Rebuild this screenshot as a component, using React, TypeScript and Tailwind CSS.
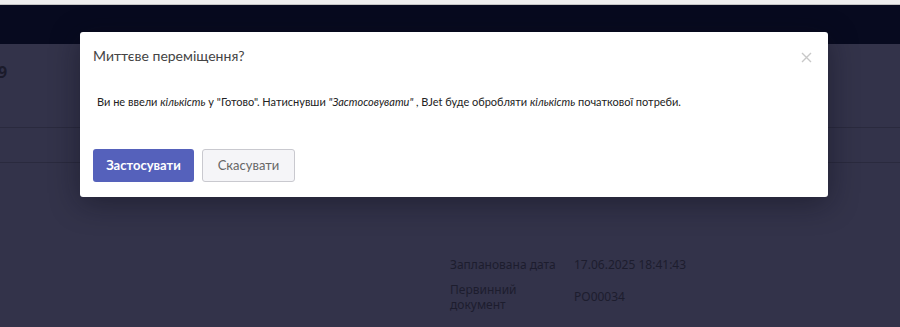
import React from "react";

const font = { fontFamily: '"Noto Sans", "Open Sans", sans-serif' };
const modalFont = { fontFamily: 'Lato, "Noto Sans", sans-serif' };

function PageBehind() {
  return (
    <div className="flex flex-col h-[327px] w-[900px] overflow-hidden">
      <div className="h-[5px] bg-[#eeeeee] border-b border-[#c4c4c4]" />
      {/* header */}
      <div className="h-[39px] bg-[#070a1f]" />
      {/* content under overlay */}
      <div className="flex-1 bg-[#33334a] relative">
        <div className="h-[83px] pt-[16px] -ml-[2px] text-[16px] font-bold text-[#1b1b2b]">9</div>
        <div className="h-[35px] border-t border-[#2a2a3e]" />
        <div className="border-t border-[#2a2a3e]" />
        <div className="pl-[450px] pt-[93px] text-[12px] text-[#1d1d2e] flex flex-col gap-[8px]">
          <div className="flex">
            <div className="w-[124px]">Запланована дата</div>
            <div>17.06.2025 18:41:43</div>
          </div>
          <div className="flex items-center">
            <div className="w-[124px] flex flex-col leading-[15px]">
              <span>Первинний</span>
              <span>документ</span>
            </div>
            <div>PO00034</div>
          </div>
        </div>
      </div>
    </div>
  );
}

function Modal() {
  return (
    <div
      className="absolute left-[80px] top-[32px] w-[748px] h-[165px] bg-white rounded-[3px] shadow-[0_6px_30px_rgba(10,10,25,0.45)] flex flex-col"
      style={modalFont}
    >
      <div className="flex items-start justify-between pl-[13px] pr-[16px] pt-[13px]">
        <div className="text-[14px] text-[#444] leading-[22px]">Миттєве переміщення?</div>
        <svg width="11" height="11" viewBox="0 0 11 11" className="mt-[7px]">
          <path d="M1 1L10 10M10 1L1 10" stroke="#c8c8c8" strokeWidth="1.4" />
        </svg>
      </div>
      <div className="pl-[17px] pt-[27px] text-[11px] text-[#222] leading-[16px]">
        Ви не ввели <i>кількість</i> у "Готово". Натиснувши <i>"Застосовувати"</i> , BJet буде обробляти{" "}
        <i>кількість</i> початкової потреби.
      </div>
      <div className="flex gap-[8px] pl-[13px] pt-[39px]">
        <button className="w-[101px] h-[33px] rounded-[3px] bg-[#5561bb] text-white text-[13px] font-bold">
          Застосувати
        </button>
        <button className="w-[93px] h-[33px] rounded-[3px] bg-[#f5f5f8] border border-[#c9c9cf] text-[#666] text-[13px]">
          Скасувати
        </button>
      </div>
    </div>
  );
}

export default function App() {
  return (
    <div className="relative w-[900px] h-[327px] overflow-hidden" style={font}>
      <PageBehind />
      <Modal />
    </div>
  );
}
